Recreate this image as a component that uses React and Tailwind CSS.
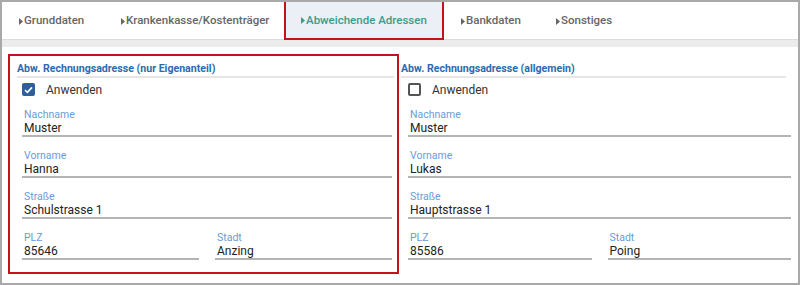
const tabs = [
  { label: 'Grunddaten', w: 'w-[102px]' },
  { label: 'Krankenkasse/Kostenträger', w: 'w-[180px]' },
  { label: 'Abweichende Adressen', w: 'w-[160px]', active: true },
  { label: 'Bankdaten', w: 'w-[95px]' },
  { label: 'Sonstiges', w: 'w-[100px]' },
];

const Caret = () => (
  <svg width="4" height="7" viewBox="0 0 4 7" className="mr-[1px] shrink-0">
    <path d="M0 0 L4 3.5 L0 7 Z" fill="currentColor" />
  </svg>
);

const Checkbox = ({ checked }) =>
  checked ? (
    <div className="w-[13px] h-[13px] rounded-[2px] bg-[#2d5f9c] flex items-center justify-center">
      <svg width="9" height="8" viewBox="0 0 9 8">
        <path d="M1 4.2 L3.4 6.4 L8 1.4" stroke="#fff" strokeWidth="1.6" fill="none" />
      </svg>
    </div>
  ) : (
    <div className="w-[13px] h-[13px] rounded-[2px] border-2 border-[#555]" />
  );

const Field = ({ label, value }) => (
  <div className="flex flex-col">
    <div className="h-[12px] leading-[12px] text-[10.5px] text-[#6b9bd6] pl-[2px]">{label}</div>
    <div className="h-[14px] leading-[14px] text-[12px] text-[#222] pl-[2px]">{value}</div>
    <div className="h-[2px] bg-[#b4b4b4]" />
  </div>
);

const Address = ({ title, checked, data, titlePad, fieldPad }) => (
  <div className="flex flex-col">
    <div className={`${titlePad} pt-[6px]`}>
      <div className="h-[14px] leading-[14px] text-[10.6px] font-bold text-[#2c6aae] border-b-2 border-[#e6e6e6] box-content">
        {title}
      </div>
    </div>
    <div className={`${fieldPad} flex flex-col`}>
      <div className="flex items-center gap-[11px] mt-[5px] h-[13px]">
        <Checkbox checked={checked} />
        <span className="text-[12px] text-[#333]">Anwenden</span>
      </div>
      <div className="flex flex-col gap-[13px] mt-[13px]">
        <Field label="Nachname" value={data.nachname} />
        <Field label="Vorname" value={data.vorname} />
        <Field label="Straße" value={data.strasse} />
        <div className="grid grid-cols-2 gap-[16px]">
          <Field label="PLZ" value={data.plz} />
          <Field label="Stadt" value={data.stadt} />
        </div>
      </div>
    </div>
  </div>
);

export default function App() {
  return (
    <div
      className="w-[800px] h-[285px] border-2 border-[#a9a9a9] bg-white flex flex-col overflow-hidden"
      style={{ fontFamily: 'Roboto, "Liberation Sans", sans-serif' }}
    >
      {/* Tabs */}
      <div className="h-[37px] flex shrink-0">
        {tabs.map((t) =>
          t.active ? (
            <div
              key={t.label}
              className={`${t.w} -mt-[2px] h-[40px] relative z-10 border-2 border-[#c4111b] bg-[#ebf0f6] flex items-center pl-[15px] pt-[1px] text-[11.5px] font-medium text-[#3d9b89]`}
            >
              <Caret />
              {t.label}
            </div>
          ) : (
            <div
              key={t.label}
              className={`${t.w} flex items-center pl-[17px] pt-[1px] text-[11.5px] font-medium text-[#666]`}
            >
              <Caret />
              {t.label}
            </div>
          )
        )}
      </div>
      <div className="h-[8px] shrink-0 bg-[#ececec] border-t border-[#dcdcdc]" />

      {/* Content */}
      <div className="flex pt-[7px] pl-[6px]">
        <div className="w-[391px] h-[220px] border-2 border-[#c4111b]">
          <Address
            title="Abw. Rechnungsadresse (nur Eigenanteil)"
            checked
            titlePad="pl-[7px] pr-[3px]"
            fieldPad="pl-[12px] pr-[5px]"
            data={{ nachname: 'Muster', vorname: 'Hanna', strasse: 'Schulstrasse 1', plz: '85646', stadt: 'Anzing' }}
          />
        </div>
        <div className="flex-1 pt-[2px]">
          <Address
            title="Abw. Rechnungsadresse (allgemein)"
            titlePad="pl-[2px] pr-[12px]"
            fieldPad="pl-[9px] pr-[7px]"
            data={{ nachname: 'Muster', vorname: 'Lukas', strasse: 'Hauptstrasse 1', plz: '85586', stadt: 'Poing' }}
          />
        </div>
      </div>
    </div>
  );
}
